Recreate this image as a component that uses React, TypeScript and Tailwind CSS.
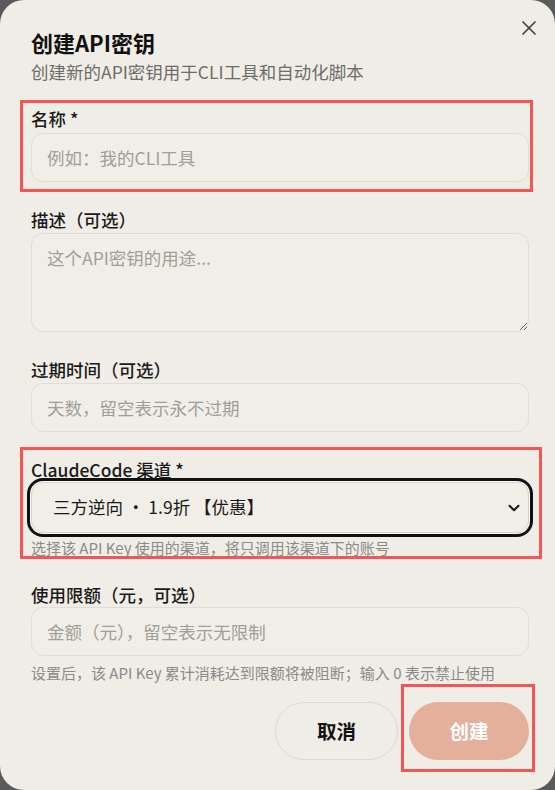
import React, { useState } from 'react';
import { X, ChevronDown } from 'lucide-react';

const font = { fontFamily: '"Noto Sans CJK SC", "Noto Sans", sans-serif' };

const inputCls =
  'w-full h-[49px] rounded-[12px] border border-[#e0ddd6] bg-[#f1eee8] px-[15px] text-[17.5px] text-[#1a1a1a] outline-none placeholder:text-[#a19e98]';

const App: React.FC = () => {
  const [channel, setChannel] = useState('reverse');

  return (
    <div className="min-h-screen bg-[#5a5a5a]" style={font}>
      <div className="relative flex h-[790px] w-[555px] flex-col rounded-[24px] bg-[#f0ede6] pl-[31px] pr-[26px] pt-[27px]">
        {/* close */}
        <button className="absolute right-[14px] top-[16px] text-[#444]">
          <X size={24} strokeWidth={1.75} />
        </button>

        <h2 className="text-[22px] font-bold leading-[30px] text-[#111]">创建API密钥</h2>
        <p className="mt-[2px] text-[17.5px] leading-[26px] text-[#6e6c68]">创建新的API密钥用于CLI工具和自动化脚本</p>

        {/* name */}
        <div className="mt-[22px] flex flex-col gap-[2px]">
          <label className="text-[17.5px] font-medium leading-[24px] text-[#1a1a1a]">名称 *</label>
          <input className={inputCls} placeholder="例如：我的CLI工具" />
        </div>

        {/* description */}
        <div className="mt-[26px] flex flex-col gap-px">
          <label className="text-[17.5px] font-medium leading-[24px] text-[#1a1a1a]">描述（可选）</label>
          <textarea
            className="h-[99px] w-full rounded-[12px] border border-[#e0ddd6] bg-[#f1eee8] px-[15px] py-[11px] text-[17.5px] leading-[26px] text-[#1a1a1a] outline-none placeholder:text-[#a19e98]"
            placeholder="这个API密钥的用途..."
          />
        </div>

        {/* expiry */}
        <div className="mt-[26px] flex flex-col gap-px">
          <label className="text-[17.5px] font-medium leading-[24px] text-[#1a1a1a]">过期时间（可选）</label>
          <input className={inputCls} placeholder="天数，留空表示永不过期" />
        </div>

        {/* channel */}
        <div className="mt-[26px] flex flex-col">
          <label className="text-[17.5px] font-medium leading-[24px] text-[#1a1a1a]">ClaudeCode 渠道 *</label>
          <div className="relative">
            <select
              value={channel}
              onChange={(e) => setChannel(e.target.value)}
              className="h-[51px] w-full appearance-none rounded-[12px] border border-[#d6d3cc] bg-[#f1eee8] pl-[21px] text-[17.5px] text-[#1a1a1a] outline-none shadow-[0_0_0_1px_#fafafa,0_0_0_4px_#111]"
            >
              <option value="reverse">三方逆向 · 1.9折 【优惠】</option>
            </select>
            <ChevronDown
              size={18}
              strokeWidth={2.75}
              className="pointer-events-none absolute right-[6px] top-1/2 -translate-y-1/2 text-[#1a1a1a]"
            />
          </div>
          <p className="mt-[5px] text-[15px] leading-[20px] text-[#8b8a8a]">选择该 API Key 使用的渠道，将只调用该渠道下的账号</p>
        </div>

        {/* quota */}
        <div className="mt-[25px] flex flex-col">
          <label className="text-[17.5px] font-medium leading-[24px] text-[#1a1a1a]">使用限额（元，可选）</label>
          <input className={inputCls} placeholder="金额（元），留空表示无限制" />
          <p className="mt-[7px] text-[15px] leading-[20px] text-[#8b8a8a]">设置后，该 API Key 累计消耗达到限额将被阻断；输入 0 表示禁止使用</p>
        </div>

        {/* actions */}
        <div className="mt-[19px] flex justify-end gap-[11px]">
          <button className="h-[58px] w-[123px] rounded-full border-[1.5px] border-[#dcd9d2] text-[19.5px] font-bold text-[#111]">
            取消
          </button>
          <button className="h-[58px] w-[120px] rounded-full bg-[#e4b09c] text-[19.5px] font-bold text-white">
            创建
          </button>
        </div>

        {/* annotation boxes */}
        <div className="pointer-events-none absolute left-[20px] top-[100px] h-[92px] w-[513px] border-[3px] border-[#f45656]" />
        <div className="pointer-events-none absolute left-[20px] top-[447px] h-[112px] w-[522px] border-[3px] border-[#f45656]" />
        <div className="pointer-events-none absolute left-[401px] top-[684px] h-[88px] w-[134px] border-[3px] border-[#f45656]" />
      </div>
    </div>
  );
};

export default App;
